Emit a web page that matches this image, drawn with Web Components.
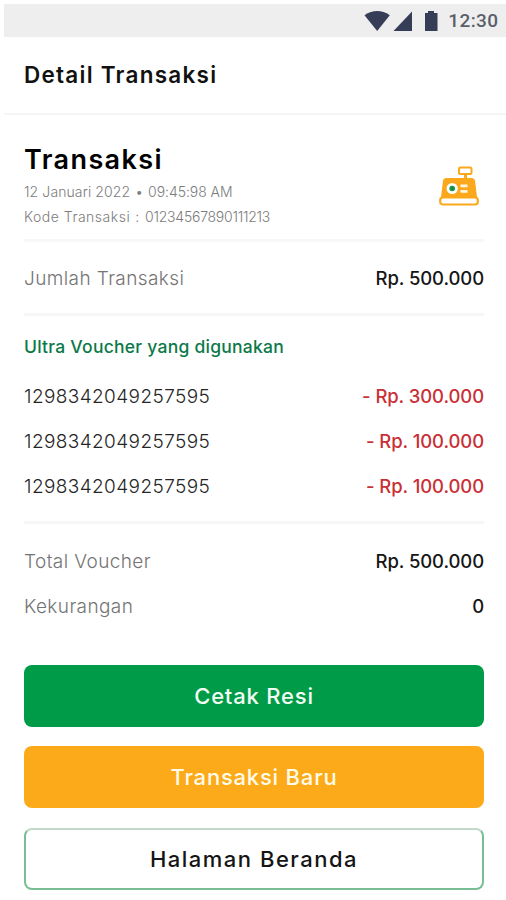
<!DOCTYPE html>
<html lang="id">
<head>
<meta charset="utf-8">
<title>Detail Transaksi</title>
<style>
body {
	margin: 0;
	background-color: #fff;
	font-family: Inter, "Open Sans", sans-serif;
}
</style>
</head>
<body>
<transaction-page></transaction-page>

<script>
function define(name, html) {
	const template = document.createElement('template');
	template.innerHTML = html;

	window.customElements.define(name, class extends HTMLElement {
		constructor() {
			super();
			this.attachShadow({ mode: 'open' }).appendChild(template.content.cloneNode(true));
		}
	});
}

define('status-bar', `
<style>
:host {
	align-items: center;
	background-color: #eee;
	box-sizing: border-box;
	color: #5b5f69;
	display: flex;
	height: 33px;
	justify-content: flex-end;
	margin: 4px 0 0 4px;
	padding-right: 7.5px;
}

svg {
	fill: #353d57;
	margin-right: 9px;
}

span {
	font: 500 19px/34px Roboto, sans-serif;
	letter-spacing: 0.4px;
}
</style>
<svg width="75" height="22" viewBox="0 0 75 22">
	<path d="M0.5 5.2Q13.2-3.2 25.8 5.2L13.2 21Z"/>
	<path d="M48 1.5V21H29.5Z"/>
	<path d="M61 3H64V1H70V3H73.5V21H61Z"/>
</svg>
<span><slot></slot></span>
`);

define('page-header', `
<style>
:host {
	border-bottom: 2px solid #f5f5f5;
	color: #111;
	display: block;
	font-size: 22.5px;
	font-weight: 600;
	letter-spacing: 1.25px;
	line-height: 76px;
	margin-left: 4px;
	padding-left: 20px;
}
</style>
<slot></slot>
`);

define('cash-register-icon', `
<style>
:host {
	display: block;
	height: 40px;
	width: 40px;
}
</style>
<svg width="40" height="40" viewBox="0 0 40 40" fill="#fba81c">
	<path d="M25 8H28V13H25Z"/>
	<rect x="20" y="1.5" width="12.5" height="6.5" rx="1.5" fill="#fff" stroke="#fba81c" stroke-width="2"/>
	<path d="M7 12H33Q35.5 12 36 14.5L38 31H2L4 14.5Q4.5 12 7 12Z"/>
	<rect x="1.2" y="31.5" width="37.6" height="7" rx="2.7" fill="#fff" stroke="#fba81c" stroke-width="2.2"/>
	<circle cx="13.2" cy="22.5" r="5.6" fill="#fff"/>
	<circle cx="13.2" cy="22.5" r="2.8" fill="#139447"/>
	<path d="M21.5 18.5H28.5V21.3H21.5ZM21.5 24H28.5V26.8H21.5Z" fill="#fff7e2"/>
</svg>
`);

define('transaction-summary', `
<style>
:host {
	align-items: flex-start;
	box-sizing: border-box;
	display: flex;
	height: 124px;
	justify-content: space-between;
	padding: 26px 5px 0 0;
}

h1 {
	font-size: 27px;
	font-weight: 600;
	letter-spacing: 1.4px;
	line-height: 38px;
	margin: 0;
}

.meta {
	color: #7c7c7c;
	display: flex;
	font-size: 14px;
	font-weight: 300;
	line-height: 25px;
}

.date { letter-spacing: 0.1px; }
.time { letter-spacing: -0.05px; }
.bullet { padding: 0 5px; }
.code-label { letter-spacing: 0.5px; }
.colon { padding: 0 6px 0 5px; }
.code { letter-spacing: -0.25px; }
cash-register-icon { margin-top: 25px; }
</style>
<div>
	<h1><slot name="title"></slot></h1>
	<div class="meta">
		<span class="date"><slot name="date"></slot></span>
		<span class="bullet">•</span>
		<span class="time"><slot name="time"></slot></span>
	</div>
	<div class="meta">
		<span class="code-label">Kode Transaksi</span>
		<span class="colon">:</span>
		<span class="code"><slot name="code"></slot></span>
	</div>
</div>
<cash-register-icon></cash-register-icon>
`);

define('detail-section', `
<style>
:host {
	border-top: 3px solid #f7f7f7;
	display: block;
}
</style>
<slot></slot>
`);

define('detail-row', `
<style>
:host {
	color: #151515;
	display: flex;
	font-size: 19px;
	justify-content: space-between;
	line-height: 45px;
}

.label {
	color: var(--row-label-color, #747474);
	font-weight: 300;
	letter-spacing: var(--row-label-spacing, 0.4px);
}

.value {
	color: var(--row-value-color, #151515);
	font-size: 18.5px;
	font-weight: 450;
	letter-spacing: -0.1px;
}
</style>
<span class="label"><slot name="label"></slot></span>
<span class="value"><slot></slot></span>
`);

define('action-button', `
<style>
:host { display: block; }

button {
	background-color: var(--button-color, #009b48);
	border: var(--button-border, none);
	border-top-color: var(--button-border-top, transparent);
	border-radius: 8px;
	box-sizing: border-box;
	color: var(--button-text, #f3fff5);
	display: block;
	font: 500 22px/1 Inter, sans-serif;
	height: 62px;
	letter-spacing: var(--button-spacing, 0.8px);
	padding: 0;
	width: 100%;
}
</style>
<button type="button"><slot></slot></button>
`);

define('transaction-page', `
<style>
:host { display: block; }

main { padding: 0 22px 0 24px; }

.amount { padding: 14px 0 12px; }

h2 {
	color: #0b7948;
	font-size: 17.5px;
	font-weight: 500;
	letter-spacing: 0.25px;
	line-height: 36px;
	margin: 0;
	padding: 13px 0 9px;
}

.vouchers { padding-bottom: 12px; }

.vouchers detail-row {
	--row-label-color: #262626;
	--row-label-spacing: 0.4px;
	--row-value-color: #c93036;
}

.totals { padding: 15px 0 36px; }

.actions {
	display: grid;
	gap: 19.4px;
}

.new {
	--button-color: #fcaa19;
	--button-text: #fffbe9;
}

.home {
	--button-color: #fff;
	--button-border: 2px solid #79bd94;
	--button-border-top: #c3d8c8;
	--button-text: #151515;
	--button-spacing: 1.5px;
}
</style>
<status-bar>12:30</status-bar>
<page-header>Detail Transaksi</page-header>
<main>
	<transaction-summary>
		<span slot="title">Transaksi</span>
		<span slot="date">12 Januari 2022</span>
		<span slot="time">09:45:98 AM</span>
		<span slot="code">01234567890111213</span>
	</transaction-summary>
	<detail-section>
		<div class="amount">
			<detail-row><span slot="label">Jumlah Transaksi</span>Rp. 500.000</detail-row>
		</div>
	</detail-section>
	<detail-section>
		<div class="vouchers">
			<h2>Ultra Voucher yang digunakan</h2>
			<detail-row><span slot="label">1298342049257595</span>- Rp. 300.000</detail-row>
			<detail-row><span slot="label">1298342049257595</span>- Rp. 100.000</detail-row>
			<detail-row><span slot="label">1298342049257595</span>- Rp. 100.000</detail-row>
		</div>
	</detail-section>
	<detail-section>
		<div class="totals">
			<detail-row><span slot="label">Total Voucher</span>Rp. 500.000</detail-row>
			<detail-row><span slot="label">Kekurangan</span>0</detail-row>
		</div>
	</detail-section>
	<div class="actions">
		<action-button>Cetak Resi</action-button>
		<action-button class="new">Transaksi Baru</action-button>
		<action-button class="home">Halaman Beranda</action-button>
	</div>
</main>
`);
</script>
</body>
</html>
